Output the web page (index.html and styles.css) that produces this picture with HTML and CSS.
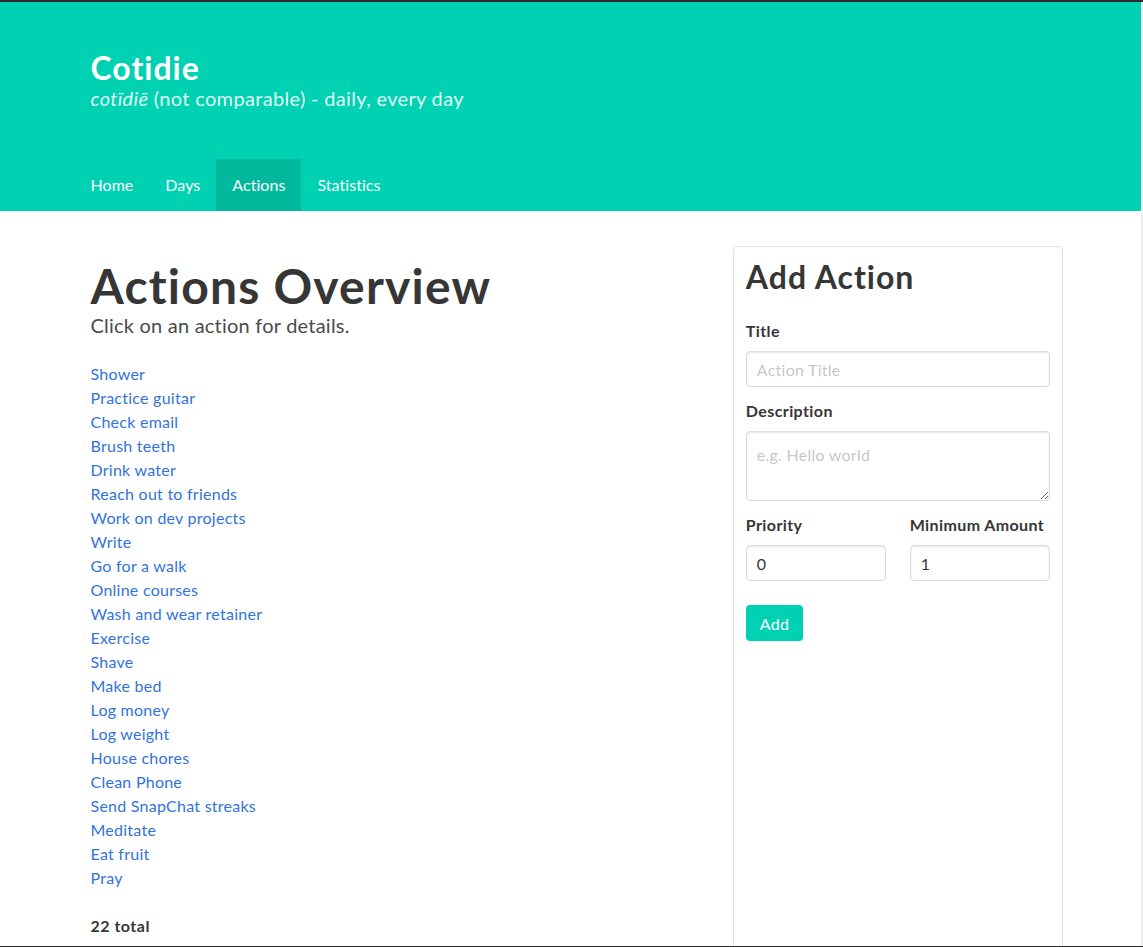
FILE: index.html
```html
<!DOCTYPE html>
<html lang="en">
<head>
<meta charset="utf-8">
<title>Cotidie</title>
<link rel="stylesheet" href="styles.css">
</head>
<body>
<div class="frame">
  <div class="page">
    <header class="hero">
      <div class="hero-body">
        <div class="container">
          <h1 class="hero-title">Cotidie</h1>
          <p class="hero-subtitle"><em>cotīdiē</em> (not comparable) - daily, every day</p>
        </div>
      </div>
      <nav class="hero-foot">
        <div class="container">
          <ul class="tabs">
            <li><a href="#">Home</a></li>
            <li><a href="#">Days</a></li>
            <li class="is-active"><a href="#">Actions</a></li>
            <li><a href="#">Statistics</a></li>
          </ul>
        </div>
      </nav>
    </header>
    <section class="section">
      <div class="container">
        <div class="columns">
          <div class="column main-col">
            <h2 class="page-title">Actions Overview</h2>
            <p class="page-subtitle">Click on an action for details.</p>
            <ul class="action-list">
              <li><a href="#">Shower</a></li>
              <li><a href="#">Practice guitar</a></li>
              <li><a href="#">Check email</a></li>
              <li><a href="#">Brush teeth</a></li>
              <li><a href="#">Drink water</a></li>
              <li><a href="#">Reach out to friends</a></li>
              <li><a href="#">Work on dev projects</a></li>
              <li><a href="#">Write</a></li>
              <li><a href="#">Go for a walk</a></li>
              <li><a href="#">Online courses</a></li>
              <li><a href="#">Wash and wear retainer</a></li>
              <li><a href="#">Exercise</a></li>
              <li><a href="#">Shave</a></li>
              <li><a href="#">Make bed</a></li>
              <li><a href="#">Log money</a></li>
              <li><a href="#">Log weight</a></li>
              <li><a href="#">House chores</a></li>
              <li><a href="#">Clean Phone</a></li>
              <li><a href="#">Send SnapChat streaks</a></li>
              <li><a href="#">Meditate</a></li>
              <li><a href="#">Eat fruit</a></li>
              <li><a href="#">Pray</a></li>
            </ul>
            <p class="total">22 total</p>
          </div>
          <div class="column side-col">
            <h2 class="card-title">Add Action</h2>
            <form class="form">
              <div class="field">
                <label class="label">Title</label>
                <input class="input" type="text" placeholder="Action Title">
              </div>
              <div class="field">
                <label class="label">Description</label>
                <textarea class="textarea" rows="2" placeholder="e.g. Hello world"></textarea>
              </div>
              <div class="field-row">
                <div class="field">
                  <label class="label">Priority</label>
                  <input class="input" type="number" value="0">
                </div>
                <div class="field">
                  <label class="label">Minimum Amount</label>
                  <input class="input" type="number" value="1">
                </div>
              </div>
              <button class="button" type="button">Add</button>
            </form>
          </div>
        </div>
      </div>
    </section>
  </div>
</div>
</body>
</html>
```

FILE: styles.css
```css
html, body {
  margin: 0;
  padding: 0;
  background: #ffffff;
}

body {
  font-family: "Lato", "Open Sans", "DejaVu Sans", sans-serif;
  font-size: 16px;
  line-height: 24px;
  letter-spacing: 0.25px;
  color: #4a4a4a;
}

.frame {
  height: 947px;
  box-sizing: border-box;
  border-top: 2px solid #2b2b2b;
  border-bottom: 1px solid #2b2b2b;
  overflow: hidden;
}

.page {
  width: 1141px;
  border-right: 2px solid #ececec;
  min-height: 100%;
}

.container {
  width: 960px;
  margin: 0 auto;
}

/* Hero */
.hero {
  background: #00d1b2;
  color: #ffffff;
}

.hero-body {
  padding: 48px 0;
}

.hero-title {
  margin: 0;
  font-size: 32px;
  line-height: 36px;
  font-weight: 700;
  letter-spacing: 1px;
  color: #ffffff;
}

.hero-subtitle {
  margin: 0;
  font-size: 20px;
  line-height: 25px;
  letter-spacing: 0.33px;
  color: rgba(255, 255, 255, 0.9);
}

.tabs {
  list-style: none;
  margin: 0 0 0 -16px;
  padding: 0;
  display: flex;
}

.tabs a {
  display: block;
  height: 52px;
  line-height: 52px;
  padding: 0 16px;
  color: #ffffff;
  text-decoration: none;
  font-size: 16px;
  letter-spacing: 0.05px;
}

.tabs .is-active a {
  background: #00b89c;
}

/* Section */
.section {
  padding: 36px 0 0;
}

.columns {
  display: flex;
  margin: 0 -12px;
  align-items: stretch;
}

.column {
  box-sizing: border-box;
}

.main-col {
  width: 655px;
  padding: 12px;
}

.side-col {
  width: 330px;
  padding: 12px;
  border: 1px solid #e0e0e0;
  border-radius: 5px;
  margin-top: -1px;
  min-height: 720px;
}

.page-title {
  margin: 0;
  font-size: 48px;
  line-height: 54px;
  font-weight: 700;
  letter-spacing: 1.2px;
  color: #363636;
}

.page-subtitle {
  margin: 0 0 24px;
  font-size: 20px;
  line-height: 25px;
  letter-spacing: 0.22px;
  color: #4a4a4a;
}

.action-list {
  list-style: none;
  margin: 0;
  padding: 0;
}

.action-list a {
  color: #3273dc;
  text-decoration: none;
}

.total {
  margin: 24px 0 0;
  font-weight: 700;
  letter-spacing: 0.5px;
  color: #363636;
}

/* Form card */
.card-title {
  margin: 0 0 24px;
  font-size: 32px;
  line-height: 36px;
  font-weight: 700;
  letter-spacing: 1px;
  color: #363636;
}

.field {
  margin-bottom: 12px;
}

.label {
  display: block;
  font-weight: 700;
  letter-spacing: 0.4px;
  color: #363636;
  margin-bottom: 8px;
}

.input, .textarea {
  display: block;
  box-sizing: border-box;
  width: 100%;
  font-family: inherit;
  font-size: 16px;
  letter-spacing: 0.25px;
  color: #363636;
  border: 1px solid #dbdbdb;
  border-radius: 4px;
  box-shadow: inset 0 1px 2px rgba(10, 10, 10, 0.1);
  background: #ffffff;
  padding: 0 10px;
  margin: 0;
}

.input {
  height: 36px;
  line-height: 24px;
}

.textarea {
  height: 70px;
  padding: 11px 10px;
  line-height: 24px;
  resize: vertical;
}

.input::placeholder, .textarea::placeholder {
  color: rgba(54, 54, 54, 0.3);
}

.input[type=number] {
  -moz-appearance: textfield;
}

.input[type=number]::-webkit-inner-spin-button,
.input[type=number]::-webkit-outer-spin-button {
  -webkit-appearance: none;
  margin: 0;
}

.field-row {
  display: flex;
  gap: 24px;
  margin-bottom: 24px;
}

.field-row .field {
  flex: 1;
  margin-bottom: 0;
}

.button {
  display: block;
  height: 36px;
  padding: 0 14px;
  background: #00d1b2;
  color: #ffffff;
  border: none;
  border-radius: 4px;
  font-family: inherit;
  font-size: 16px;
  letter-spacing: 0.25px;
  cursor: pointer;
}
```
